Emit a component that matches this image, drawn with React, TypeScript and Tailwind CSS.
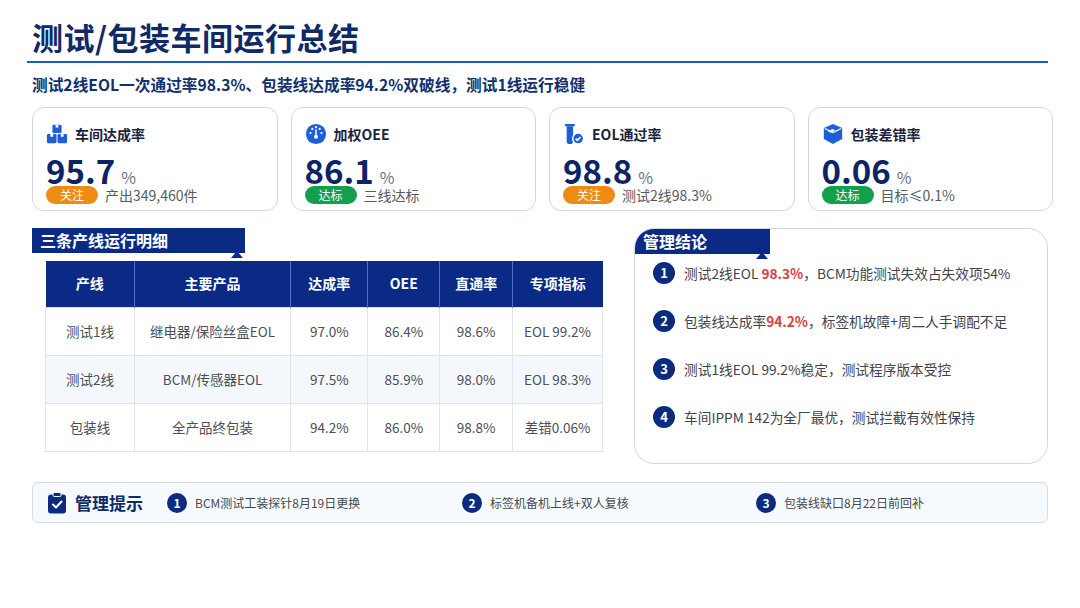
import React from "react";

const font = { fontFamily: '"Noto Sans CJK SC", "Noto Sans", sans-serif' };

function FactoryIcon() {
  return (
    <svg width="22" height="22" viewBox="0 0 24 24" fill="#1d5fd6">
      <rect x="7" y="2" width="10" height="9" rx="1.5" />
      <rect x="10.5" y="2" width="3" height="3" fill="#fff" />
      <rect x="1" y="12" width="10.5" height="10" rx="1.5" />
      <rect x="12.5" y="12" width="10.5" height="10" rx="1.5" />
      <rect x="4.8" y="12" width="3" height="3" fill="#fff" />
      <rect x="16.2" y="12" width="3" height="3" fill="#fff" />
    </svg>
  );
}

function GaugeIcon() {
  return (
    <svg width="22" height="22" viewBox="0 0 24 24">
      <circle cx="12" cy="12" r="11" fill="#1d5fd6" />
      <circle cx="12" cy="15" r="2.2" fill="#fff" />
      <rect x="11.2" y="7" width="1.6" height="8" fill="#fff" />
      <circle cx="6" cy="11" r="1.2" fill="#fff" />
      <circle cx="18" cy="11" r="1.2" fill="#fff" />
      <circle cx="8" cy="6.5" r="1.2" fill="#fff" />
      <circle cx="16" cy="6.5" r="1.2" fill="#fff" />
      <circle cx="12" cy="4.5" r="1.2" fill="#fff" />
    </svg>
  );
}

function TubeIcon() {
  return (
    <svg width="22" height="22" viewBox="0 0 24 24">
      <rect x="2" y="1" width="11" height="2.5" rx="1" fill="#1d5fd6" />
      <path d="M4 3.5h7v16a3.5 3.5 0 0 1-7 0z" fill="#1d5fd6" />
      <circle cx="16.5" cy="17" r="6" fill="#1d5fd6" stroke="#fff" strokeWidth="1.6" />
      <path d="M13.8 17l1.9 1.9 3.3-3.6" stroke="#fff" strokeWidth="1.7" fill="none" />
    </svg>
  );
}

function BoxIcon() {
  return (
    <svg width="22" height="22" viewBox="0 0 24 24" fill="#1d5fd6">
      <path d="M12 1l10 4.5v12L12 23 2 17.5v-12z" />
      <path d="M3 6l9 4.5 9-4.5" stroke="#fff" strokeWidth="1.4" fill="none" />
      <path d="M6.5 9l5-2.5 3 1.5-5 2.5z" fill="#fff" />
    </svg>
  );
}

function ClipIcon() {
  return (
    <svg width="20" height="22" viewBox="0 0 20 22">
      <rect x="1" y="2.5" width="18" height="19" rx="3" fill="#0b2c7e" />
      <rect x="6" y="0.5" width="8" height="4" rx="1.2" fill="#0b2c7e" stroke="#fff" strokeWidth="1" />
      <path d="M6 12.5l3 3 5.5-6" stroke="#fff" strokeWidth="2" fill="none" strokeLinecap="round" strokeLinejoin="round" />
    </svg>
  );
}

const kpis = [
  { icon: <FactoryIcon />, label: "车间达成率", value: "95.7", badge: "关注", warn: true, note: "产出349,460件" },
  { icon: <GaugeIcon />, label: "加权OEE", value: "86.1", badge: "达标", warn: false, note: "三线达标" },
  { icon: <TubeIcon />, label: "EOL通过率", value: "98.8", badge: "关注", warn: true, note: "测试2线98.3%" },
  { icon: <BoxIcon />, label: "包装差错率", value: "0.06", badge: "达标", warn: false, note: "目标≤0.1%" },
];

const rows = [
  ["测试1线", "继电器/保险丝盒EOL", "97.0%", "86.4%", "98.6%", "EOL 99.2%"],
  ["测试2线", "BCM/传感器EOL", "97.5%", "85.9%", "98.0%", "EOL 98.3%"],
  ["包装线", "全产品终包装", "94.2%", "86.0%", "98.8%", "差错0.06%"],
];

function Num({ n, size = "w-[22px] h-[22px] text-[13px]" }: { n: number; size?: string }) {
  return (
    <span className={`${size} shrink-0 rounded-full bg-[#0b2c7e] text-white font-bold flex items-center justify-center`}>
      {n}
    </span>
  );
}

function SectionTag({ text, w }: { text: string; w: string }) {
  return (
    <div className={`relative ${w} h-[25px] bg-[#0a2a86] text-white text-[16px] font-bold leading-[25px] pl-[8px]`}>
      {text}
      <span className="absolute right-[2px] -bottom-[5px] w-0 h-0 border-l-[6px] border-r-[6px] border-b-[7px] border-l-transparent border-r-transparent border-b-[#0a2a86]" />
    </div>
  );
}

export default function App() {
  return (
    <div className="w-[1080px] h-[608px] bg-white relative overflow-hidden" style={font}>
      <div className="pl-[32px] pr-[32px] pt-[17px]">
        <h1 className="text-[31px] leading-[40px] font-bold text-[#0f2a66] tracking-[0.5px]">测试/包装车间运行总结</h1>
        <div className="h-[2px] bg-[#1f5bc4] mt-[4px] -ml-[5px]" />
        <p className="mt-[12px] text-[15.7px] leading-[20px] font-bold text-[#12306e]">
          测试2线EOL一次通过率98.3%、包装线达成率94.2%双破线，测试1线运行稳健
        </p>

        <div className="mt-[12px] grid grid-cols-4 gap-[13px] w-[1021px]">
          {kpis.map((k) => (
            <div key={k.label} className="h-[104px] rounded-[12px] border border-[#d3d8e0] pl-[13px] pt-[15px] bg-white">
              <div className="flex items-center gap-[7px] h-[22px]">
                {k.icon}
                <span className="text-[14px] font-bold text-[#1a2440]">{k.label}</span>
              </div>
              <div className="flex items-baseline mt-[10px] h-[30px]">
                <span className="text-[33px] leading-[30px] font-bold text-[#0b2466]">{k.value}</span>
                <span className="ml-[6px] text-[16px] leading-[16px] text-[#6b7280]">%</span>
              </div>
              <div className="flex items-center gap-[7px] h-[18px] mt-[1px]">
                <span
                  className={`w-[52px] h-[18px] rounded-full text-white text-[12px] leading-[18px] text-center ${k.warn ? "bg-[#ee8b12]" : "bg-[#13a04e]"}`}
                >
                  {k.badge}
                </span>
                <span className="text-[14px] leading-[18px] text-[#555b66]">{k.note}</span>
              </div>
            </div>
          ))}
        </div>

        <div className="mt-[17px] flex">
          <div className="w-[571px]">
            <SectionTag text="三条产线运行明细" w="w-[213px]" />
            <table className="ml-[13px] mt-[8px] border-collapse text-center text-[13.5px] text-[#4a4f58]">
              <thead>
                <tr className="bg-[#0a2a86] text-white h-[46px] text-[14px]">
                  <th className="w-[89px] border-r border-[#4e74c8] font-bold">产线</th>
                  <th className="w-[157px] border-r border-[#4e74c8] font-bold">主要产品</th>
                  <th className="w-[77px] border-r border-[#4e74c8] font-bold">达成率</th>
                  <th className="w-[72px] border-r border-[#4e74c8] font-bold">OEE</th>
                  <th className="w-[73px] border-r border-[#4e74c8] font-bold">直通率</th>
                  <th className="w-[90px] font-bold">专项指标</th>
                </tr>
              </thead>
              <tbody>
                {rows.map((r, i) => (
                  <tr key={r[0]} className={`h-[48px] ${i === 1 ? "bg-[#f4f8fd]" : "bg-white"}`}>
                    {r.map((c, j) => (
                      <td key={j} className="border border-[#dfe3ea]">
                        {c}
                      </td>
                    ))}
                  </tr>
                ))}
              </tbody>
            </table>
          </div>

          <div className="ml-[31px] w-[414px] h-[236px] rounded-[20px] border border-[#d3d8e0] overflow-hidden">
            <SectionTag text="管理结论" w="w-[135px]" />
            <ul className="pl-[18px] pt-[8px] flex flex-col gap-[26px] text-[13.7px] text-[#3f444d]">
              <li className="flex items-center gap-[9px] h-[22px]">
                <Num n={1} />
                <span>
                  测试2线EOL <b className="text-[#d9413c]">98.3%</b>，BCM功能测试失效占失效项54%
                </span>
              </li>
              <li className="flex items-center gap-[9px] h-[22px]">
                <Num n={2} />
                <span>
                  包装线达成率<b className="text-[#d9413c]">94.2%</b>，标签机故障+周二人手调配不足
                </span>
              </li>
              <li className="flex items-center gap-[9px] h-[22px]">
                <Num n={3} />
                <span>测试1线EOL 99.2%稳定，测试程序版本受控</span>
              </li>
              <li className="flex items-center gap-[9px] h-[22px]">
                <Num n={4} />
                <span>车间IPPM 142为全厂最优，测试拦截有效性保持</span>
              </li>
            </ul>
          </div>
        </div>

        <div className="mt-[18px] h-[41px] w-[1016px] rounded-[6px] border border-[#d6dce4] bg-[#f6f9fd] flex items-center pl-[14px]">
          <ClipIcon />
          <span className="ml-[8px] text-[17px] font-bold text-[#0f2a66] w-[96px]">管理提示</span>
          <div className="flex items-center gap-[8px] w-[295px] -ml-[4px]">
            <Num n={1} size="w-[20px] h-[20px] text-[12px]" />
            <span className="text-[12px] text-[#444a54]">BCM测试工装探针8月19日更换</span>
          </div>
          <div className="flex items-center gap-[8px] w-[294px]">
            <Num n={2} size="w-[20px] h-[20px] text-[12px]" />
            <span className="text-[12px] text-[#444a54]">标签机备机上线+双人复核</span>
          </div>
          <div className="flex items-center gap-[8px]">
            <Num n={3} size="w-[20px] h-[20px] text-[12px]" />
            <span className="text-[12px] text-[#444a54]">包装线缺口8月22日前回补</span>
          </div>
        </div>
      </div>
    </div>
  );
}
